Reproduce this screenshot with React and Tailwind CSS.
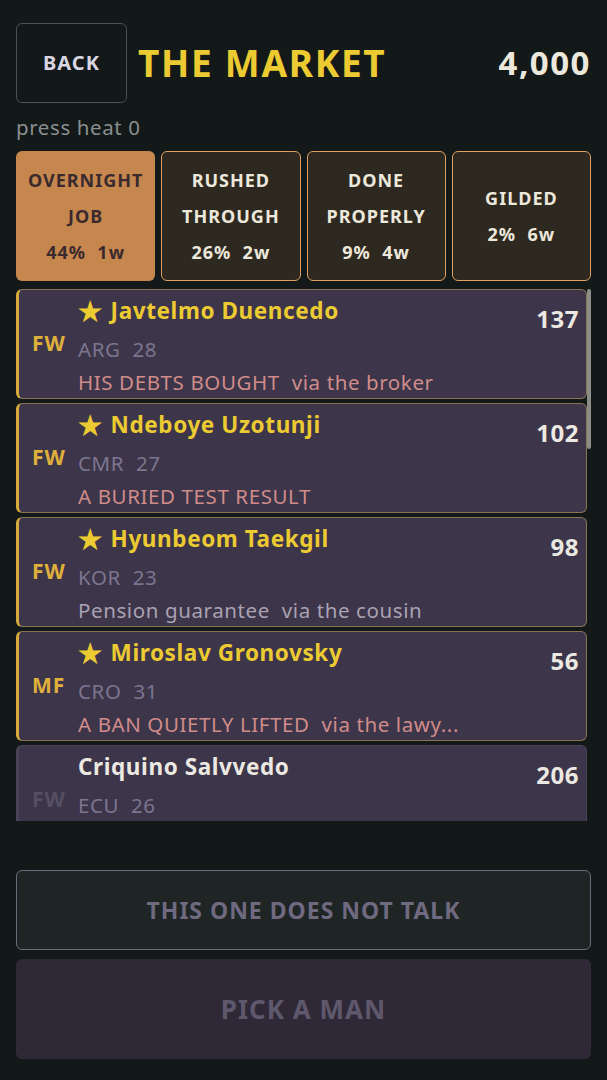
import React from 'react';

const font = { fontFamily: '"Noto Sans", "Open Sans", sans-serif' };

const deals = [
  { id: 1, label: ['OVERNIGHT', 'JOB'], odds: '44%  1w', active: true },
  { id: 2, label: ['RUSHED', 'THROUGH'], odds: '26%  2w' },
  { id: 3, label: ['DONE', 'PROPERLY'], odds: '9%  4w' },
  { id: 4, label: ['GILDED'], odds: '2%  6w' },
];

// last one is cut off by the list, so only the top two lines show
const players = [
  { id: 1, pos: 'FW', name: 'Javtelmo Duencedo', nat: 'ARG', age: 28, value: 137, star: true, lever: 'HIS DEBTS BOUGHT', via: 'via the broker', hot: true },
  { id: 2, pos: 'FW', name: 'Ndeboye Uzotunji', nat: 'CMR', age: 27, value: 102, star: true, lever: 'A BURIED TEST RESULT', hot: true },
  { id: 3, pos: 'FW', name: 'Hyunbeom Taekgil', nat: 'KOR', age: 23, value: 98, star: true, lever: 'Pension guarantee', via: 'via the cousin' },
  { id: 4, pos: 'MF', name: 'Miroslav Gronovsky', nat: 'CRO', age: 31, value: 56, star: true, lever: 'A BAN QUIETLY LIFTED', via: 'via the lawy...', hot: true },
  { id: 5, pos: 'FW', name: 'Criquino Salvvedo', nat: 'ECU', age: 26, value: 206, star: false },
];

function PlayerCard({ p }) {
  const cardTone = p.star
    ? 'border-[#8a7352] border-l-[#d8aa3c]'
    : 'border-[#4a4258] border-l-[#4a4258]';
  return (
    <div className={`flex h-[110px] shrink-0 rounded-md border border-l-[3px] bg-[#3d3549] ${cardTone}`}>
      <div className="flex w-[59px] items-center pl-[13px]">
        <span className={`text-[21px] font-bold tracking-[1px] ${p.star ? 'text-[#e0b03c]' : 'text-[#564f64]'}`}>{p.pos}</span>
      </div>
      <div className="flex min-w-0 flex-1 flex-col pt-[5px]">
        <div className={`flex items-center gap-[8px] text-[22.5px] font-bold leading-[32px] tracking-[0.6px] ${p.star ? 'text-[#eccb32]' : 'text-[#ece8e2]'}`}>
          {p.star && <span className="text-[27px] leading-[32px]">★</span>}
          <span>{p.name}</span>
        </div>
        <div className="mt-[6px] text-[20.5px] leading-[32px] tracking-[0.6px] text-[#7c7590]">
          {p.nat}&nbsp;&nbsp;{p.age}
        </div>
        {p.lever && (
          <div className={`mt-[1px] truncate pr-2 text-[20.5px] leading-[32px] tracking-[0.6px] ${p.hot ? 'text-[#d08c8a]' : 'text-[#a9a2b3]'}`}>
            {p.lever}{p.via && <>&nbsp;&nbsp;{p.via}</>}
          </div>
        )}
      </div>
      <div className="pr-[7px] pt-[11px] text-[24px] font-bold tracking-[0.5px] text-[#ece8e2]">{p.value}</div>
    </div>
  );
}

export default function App() {
  return (
    <div className="flex h-[1080px] w-[607px] flex-col overflow-hidden bg-[#131918] px-4 pb-[21px] pt-[23px]" style={font}>
      {/* header */}
      <div className="flex items-center">
        <button className="flex h-[80px] w-[111px] items-center justify-center rounded-md border border-[#4b5152] text-[20px] font-bold tracking-[1px] text-[#d9d5e2]">
          BACK
        </button>
        <h1 className="ml-[11px] text-[37px] font-bold tracking-[1.7px] text-[#eccb32]">THE MARKET</h1>
        <div className="ml-auto text-[33px] font-bold tracking-[1.5px] text-[#ede8dc]">4,000</div>
      </div>
      <div className="mt-[11px] text-[20.5px] leading-[26px] tracking-[0.6px] text-[#8a8e90]">press heat 0</div>

      {/* deal types */}
      <div className="mt-[11px] grid grid-cols-4 gap-[6px]">
        {deals.map(d => (
          <div
            key={d.id}
            className={`flex h-[130px] flex-col items-center justify-center rounded-md text-center text-[18px] font-bold leading-[36px] tracking-[1px] ${
              d.active ? 'bg-[#c6874f] text-[#3a2a2d]' : 'border-[1.5px] border-[#dfa062] bg-[#2e2920] text-[#ede8dc]'
            }`}
          >
            {d.label.map(l => <div key={l}>{l}</div>)}
            <div className="whitespace-pre">{d.odds}</div>
          </div>
        ))}
      </div>

      {/* players */}
      <div className="mt-[8px] flex h-[532px]">
        <div className="flex min-w-0 flex-1 flex-col gap-[4px] overflow-hidden">
          {players.map(p => <PlayerCard key={p.id} p={p} />)}
        </div>
        <div className="w-[4px]">
          <div className="h-[160px] rounded-full bg-[#8c8c88]" />
        </div>
      </div>

      {/* actions */}
      <div className="mt-auto flex flex-col gap-[9px]">
        <button className="flex h-[80px] items-center justify-center rounded-md border-[1.5px] border-[#6b6a7a] bg-[#1f2525] text-[23px] font-bold tracking-[1px] text-[#6f6a80]">
          THIS ONE DOES NOT TALK
        </button>
        <button className="flex h-[100px] items-center justify-center rounded-md bg-[#2f2937] text-[26px] font-bold tracking-[1px] text-[#5f586d]">
          PICK A MAN
        </button>
      </div>
    </div>
  );
}
